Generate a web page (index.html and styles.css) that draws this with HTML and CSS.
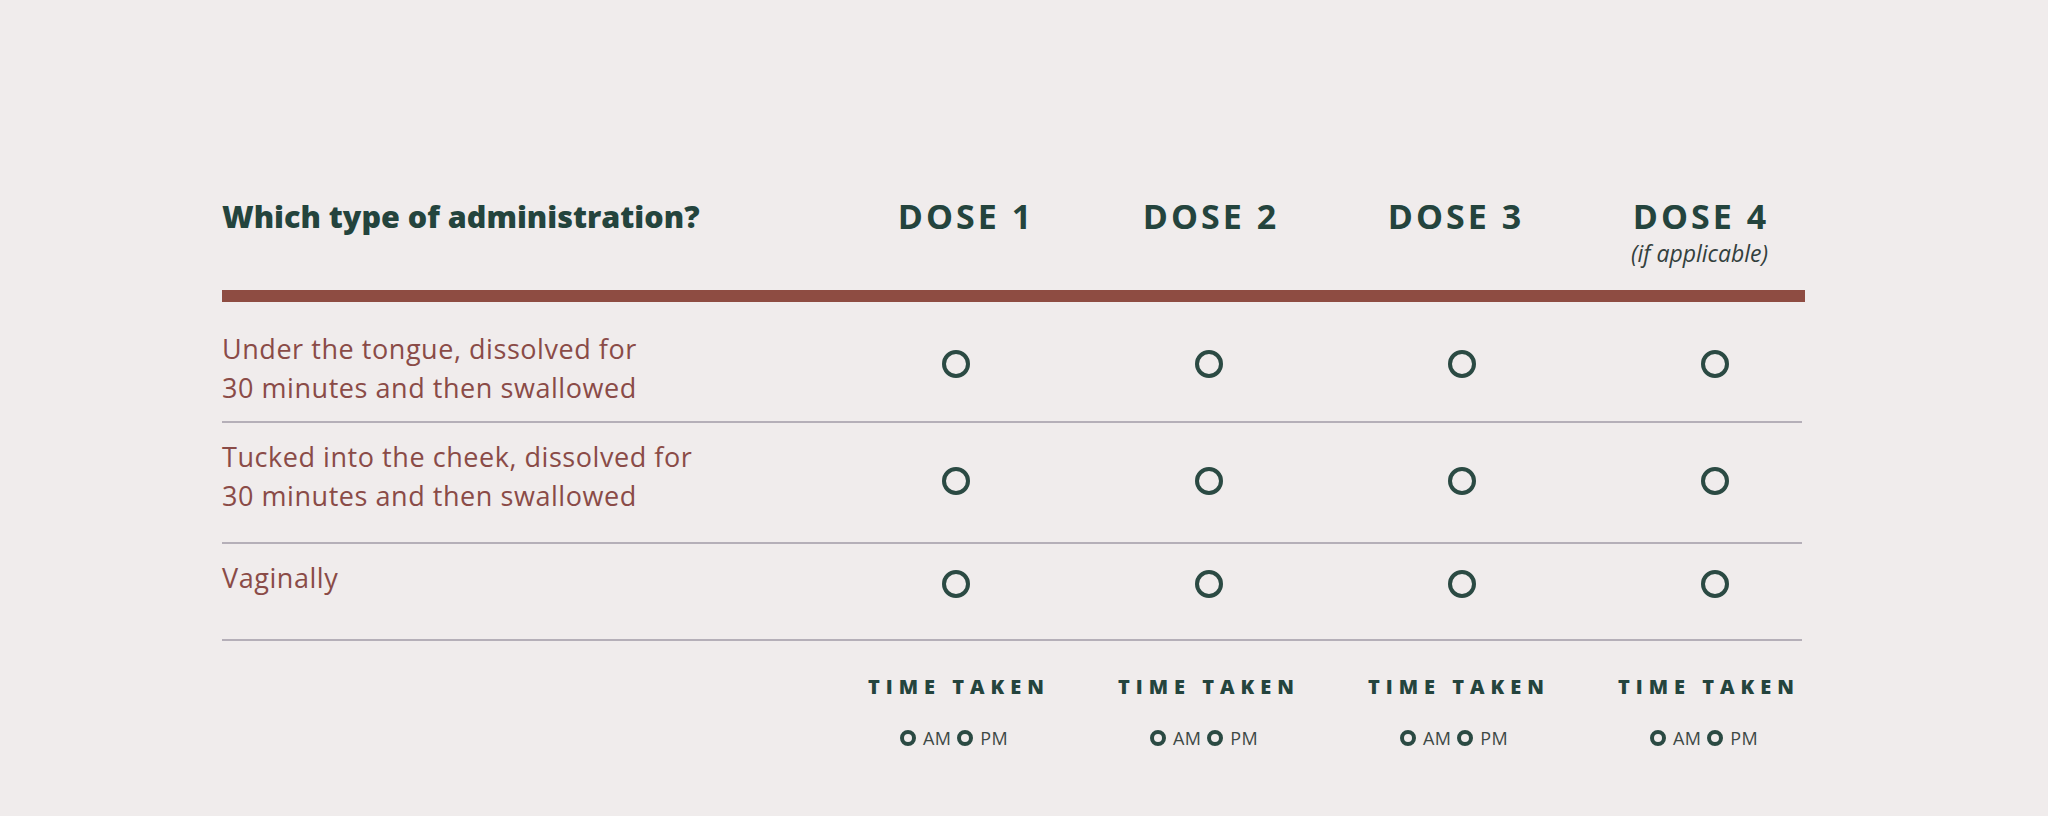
FILE: index.html
```html
<!DOCTYPE html>
<html lang="en">
<head>
<meta charset="utf-8">
<title>Administration record</title>
<link rel="stylesheet" href="styles.css">
</head>
<body>
<main class="sheet">
  <header class="head">
    <h1 class="question">Which type of administration?</h1>
    <div class="dose"><div class="dose-title">DOSE 1</div></div>
    <div class="dose"><div class="dose-title">DOSE 2</div></div>
    <div class="dose"><div class="dose-title">DOSE 3</div></div>
    <div class="dose"><div class="dose-title">DOSE 4</div><div class="dose-note">(if applicable)</div></div>
  </header>
  <div class="rule"></div>
  <section class="options">
    <div class="option option-1">
      <div class="label">Under the tongue, dissolved for<br>30 minutes and then swallowed</div>
      <span class="dot"></span><span class="dot"></span><span class="dot"></span><span class="dot"></span>
    </div>
    <div class="option option-2">
      <div class="label">Tucked into the cheek, dissolved for<br>30 minutes and then swallowed</div>
      <span class="dot"></span><span class="dot"></span><span class="dot"></span><span class="dot"></span>
    </div>
    <div class="option option-3">
      <div class="label">Vaginally</div>
      <span class="dot"></span><span class="dot"></span><span class="dot"></span><span class="dot"></span>
    </div>
  </section>
  <section class="times">
    <div class="spacer"></div>
    <div class="time"><div class="time-label">TIME TAKEN</div><div class="ampm"><span class="mini"></span><span>AM</span><span class="mini"></span><span>PM</span></div></div>
    <div class="time"><div class="time-label">TIME TAKEN</div><div class="ampm"><span class="mini"></span><span>AM</span><span class="mini"></span><span>PM</span></div></div>
    <div class="time"><div class="time-label">TIME TAKEN</div><div class="ampm"><span class="mini"></span><span>AM</span><span class="mini"></span><span>PM</span></div></div>
    <div class="time"><div class="time-label">TIME TAKEN</div><div class="ampm"><span class="mini"></span><span>AM</span><span class="mini"></span><span>PM</span></div></div>
  </section>
</main>
</body>
</html>
```
FILE: styles.css
```css
html, body {
  margin: 0;
  background: #f0ecec;
}
body {
  font-family: "Open Sans", "Noto Sans", sans-serif;
  color: #24443d;
}
.sheet {
  width: 1583px;
  padding: 196px 0 0 222px;
}
.head {
  display: grid;
  grid-template-columns: 620px repeat(4, 245px);
  align-items: start;
}
.question {
  margin: 0;
  font-size: 30.5px;
  font-weight: 800;
  line-height: 41px;
  letter-spacing: 0;
  color: #24443d;
}
.dose {
  text-align: center;
}
.dose-title {
  font-size: 34px;
  font-weight: 700;
  line-height: 41px;
  letter-spacing: 3px;
  padding-left: 3px;
  color: #24443d;
}
.dose-note {
  margin-top: 3px;
  font-size: 23px;
  font-style: italic;
  line-height: 26px;
  color: #33403d;
}
.rule {
  height: 12px;
  margin-top: 24px;
  background: #8e4c42;
}
.option {
  display: grid;
  grid-template-columns: 607px repeat(4, 253px);
  align-items: center;
  width: 1580px;
  border-bottom: 2px solid #b5afb8;
}
.option-1 { padding: 27px 0 14px; --shift: -4px; }
.option-2 { padding: 14px 0 27px; --shift: 5px; }
.option-3 { padding: 14px 0 42px; --shift: 6px; }
.label {
  font-size: 27px;
  font-weight: 500;
  line-height: 39px;
  letter-spacing: 0.55px;
  color: #8a4b47;
}
.dot {
  justify-self: center;
  width: 28px;
  height: 28px;
  box-sizing: border-box;
  border: 4px solid #2b4a43;
  border-radius: 50%;
  transform: translateY(var(--shift));
}
.times {
  display: grid;
  grid-template-columns: 609px repeat(4, 250px);
  margin-top: 32px;
}
.time {
  display: flex;
  flex-direction: column;
  align-items: center;
}
.time-label {
  font-size: 20px;
  font-weight: 800;
  line-height: 28px;
  letter-spacing: 6px;
  padding-left: 6px;
  color: #24443d;
}
.ampm {
  display: flex;
  align-items: center;
  margin-top: 26px;
  margin-left: -4px;
  font-size: 18px;
  line-height: 22px;
  letter-spacing: 0.3px;
  color: #3d4845;
}
.mini {
  width: 16px;
  height: 16px;
  box-sizing: border-box;
  border: 4px solid #2b4a43;
  border-radius: 50%;
  margin-right: 7px;
}
.ampm span:nth-child(2) {
  margin-right: 6px;
}
```
